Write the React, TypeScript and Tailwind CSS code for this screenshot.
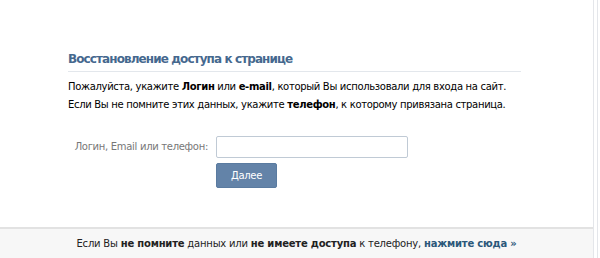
import React from "react";

export default function App() {
  const font = { fontFamily: '"DejaVu Sans", Tahoma, sans-serif' };
  return (
    <div className="w-[600px] h-[258px] bg-white flex overflow-hidden" style={font}>
      <div className="w-[594px] h-full flex flex-col border-r border-[#e4e6ea]">
        <div className="flex-1 pl-[68px] pr-[72px] pt-[51px]">
          <div className="text-[12px] font-bold text-[#45688e] leading-[17px] pb-[3px] border-b border-[#e3e7ec] whitespace-nowrap tracking-[-0.9px]">
            Восстановление доступа к странице
          </div>
          <div className="mt-[6px] text-[10px] text-black leading-[18px] whitespace-nowrap tracking-[-0.32px]">
            <div>
              Пожалуйста, укажите <b>Логин</b> или <b>e-mail</b>, который Вы использовали для входа на сайт.
            </div>
            <div>
              Если Вы не помните этих данных, укажите <b>телефон</b>, к которому привязана страница.
            </div>
          </div>
          <div className="mt-[22px] flex">
            <div className="w-[148px] text-right pr-[8px] text-[10px] text-[#777] leading-[22px] whitespace-nowrap tracking-[-0.3px]">
              Логин, Email или телефон:
            </div>
            <div className="flex flex-col gap-[5px]">
              <div className="w-[192px] h-[22px] border border-[#c0cad5] bg-white rounded-[2px]" />
              <div className="w-[61px] h-[25px] bg-[#6383a8] rounded-[2px] flex items-center justify-center text-white text-[10px] border border-[#5a7ba0] tracking-[-0.3px]">
                Далее
              </div>
            </div>
          </div>
        </div>
        <div className="h-[31px] border-t-2 border-[#e2e2e2] bg-[#f7f7f7] flex items-center justify-center text-[10px] text-[#222] pb-[1px] whitespace-nowrap tracking-[-0.2px]">
          <span>
            Если Вы <b>не помните</b> данных или <b>не имеете доступа</b> к телефону,{" "}
            <b className="text-[#2b587a]">нажмите сюда »</b>
          </span>
        </div>
      </div>
      <div className="w-[3px]" />
      <div className="w-[1px] bg-[#e4e6ea]" />
    </div>
  );
}
